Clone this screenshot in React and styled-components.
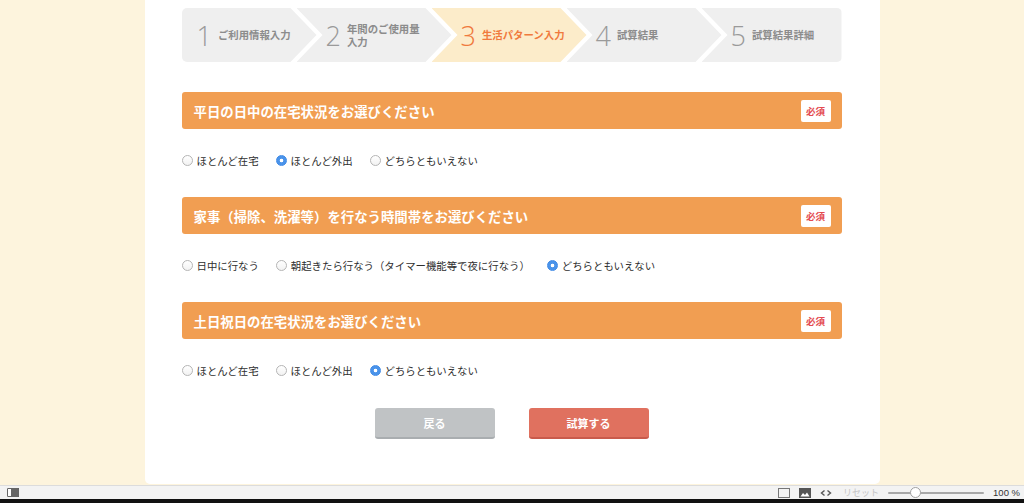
import styled, { createGlobalStyle } from "styled-components";

const GlobalStyle = createGlobalStyle`
  html, body {
    margin: 0;
    padding: 0;
  }
  body {
    background: #fdf4dd;
    font-family: "Noto Sans CJK JP", "Noto Sans", sans-serif;
  }
`;

const steps = [
  { no: 1, label: ["ご利用情報入力"] },
  { no: 2, label: ["年間のご使用量", "入力"] },
  { no: 3, label: ["生活パターン入力"], active: true },
  { no: 4, label: ["試算結果"] },
  { no: 5, label: ["試算結果詳細"] },
];

const questions = [
  {
    title: "平日の日中の在宅状況をお選びください",
    options: ["ほとんど在宅", "ほとんど外出", "どちらともいえない"],
    selected: 1,
  },
  {
    title: "家事（掃除、洗濯等）を行なう時間帯をお選びください",
    options: ["日中に行なう", "朝起きたら行なう（タイマー機能等で夜に行なう）", "どちらともいえない"],
    selected: 2,
  },
  {
    title: "土日祝日の在宅状況をお選びください",
    options: ["ほとんど在宅", "ほとんど外出", "どちらともいえない"],
    selected: 2,
  },
];

export default function App() {
  return (
    <Screen>
      <GlobalStyle />
      <Stage>
        <Panel>
          <Steps>
            {steps.map((s, i) => (
              <Step
                key={s.no}
                $first={i === 0}
                $last={i === steps.length - 1}
                $active={s.active}
              >
                <StepNo $active={s.active}>{s.no}</StepNo>
                <StepLabel $active={s.active}>
                  {s.label.map((l) => (
                    <span key={l}>{l}</span>
                  ))}
                </StepLabel>
              </Step>
            ))}
          </Steps>

          {questions.map((q) => (
            <Section key={q.title}>
              <Header>
                <Title>{q.title}</Title>
                <Required>必須</Required>
              </Header>
              <Options>
                {q.options.map((o, oi) => (
                  <Option key={o}>
                    <Radio $checked={oi === q.selected} />
                    {o}
                  </Option>
                ))}
              </Options>
            </Section>
          ))}

          <Buttons>
            <Button $variant="back">戻る</Button>
            <Button $variant="go">試算する</Button>
          </Buttons>
        </Panel>
      </Stage>

      <StatusBar>
        <SidebarIcon />
        <BarRight>
          <svg width="12" height="10" viewBox="0 0 12 10">
            <rect x="0.5" y="0.5" width="11" height="9" fill="none" stroke="#777" />
          </svg>
          <svg width="12" height="10" viewBox="0 0 12 10">
            <rect x="0" y="0" width="12" height="10" fill="#555" />
            <path d="M1.5 8.5 L4 5 L6 7 L8 4.5 L10.5 8.5 Z" fill="#fff" />
          </svg>
          <svg width="12" height="10" viewBox="0 0 12 10">
            <path d="M4.5 2.5 L1.5 5 L4.5 7.5" fill="none" stroke="#555" strokeWidth="1.4" />
            <path d="M7.5 2.5 L10.5 5 L7.5 7.5" fill="none" stroke="#555" strokeWidth="1.4" />
          </svg>
          <ResetText>リセット</ResetText>
          <Slider>
            <Knob />
          </Slider>
          <Zoom>100 %</Zoom>
        </BarRight>
      </StatusBar>
      <BlackEdge />
    </Screen>
  );
}

const Screen = styled.div`
  height: 503px;
  display: flex;
  flex-direction: column;
  overflow: hidden;
`;

const Stage = styled.div`
  height: 485px;
  display: flex;
  justify-content: center;
  background: #fdf4dd;
`;

const Panel = styled.main`
  width: 735px;
  height: 484px;
  box-sizing: border-box;
  padding: 8px 38px 0 37px;
  background: #fff;
  border-radius: 0 0 5px 5px;
`;

const Steps = styled.ol`
  list-style: none;
  margin: 0;
  padding: 0;
  display: flex;
  height: 54px;
`;

const Step = styled.li`
  flex: ${(p) => (p.$last ? "1 1 auto" : p.$first ? "0 0 135px" : "0 0 155px")};
  margin-left: ${(p) => (p.$first ? "0" : "-20px")};
  display: flex;
  align-items: center;
  gap: 6px;
  padding-left: ${(p) => (p.$first ? "15px" : "29px")};
  box-sizing: border-box;
  background: ${(p) => (p.$active ? "#fcecca" : "#efefef")};
  border-radius: ${(p) => (p.$first ? "5px 0 0 5px" : p.$last ? "0 5px 5px 0" : "0")};
  clip-path: ${(p) =>
    p.$first
      ? "polygon(0 0, calc(100% - 26px) 0, 100% 50%, calc(100% - 26px) 100%, 0 100%)"
      : p.$last
      ? "polygon(0 0, 100% 0, 100% 100%, 0 100%, 26px 50%)"
      : "polygon(0 0, calc(100% - 26px) 0, 100% 50%, calc(100% - 26px) 100%, 0 100%, 26px 50%)"};
`;

const StepNo = styled.span`
  font-family: "Open Sans", "Lato", sans-serif;
  font-weight: 300;
  font-size: 27px;
  line-height: 1;
  color: ${(p) => (p.$active ? "#f07a3d" : "#9a9a9a")};
`;

const StepLabel = styled.span`
  display: flex;
  flex-direction: column;
  gap: 1px;
  font-size: 10.4px;
  line-height: 12px;
  font-weight: 700;
  color: ${(p) => (p.$active ? "#f07a3d" : "#8c8c8c")};
`;

const Section = styled.section`
  margin-top: 30px;
`;

const Header = styled.div`
  height: 37px;
  display: flex;
  align-items: center;
  justify-content: space-between;
  padding: 0 11px 0 12px;
  background: #f19e52;
  border-radius: 3px;
`;

const Title = styled.h2`
  margin: 0;
  font-size: 13.4px;
  font-weight: 700;
  color: #fff;
`;

const Required = styled.span`
  width: 30px;
  height: 22px;
  display: flex;
  align-items: center;
  justify-content: center;
  background: #fff;
  border-radius: 2px;
  font-size: 9.5px;
  font-weight: 700;
  color: #e44b50;
`;

const Options = styled.div`
  margin-top: 24px;
  height: 14px;
  display: flex;
  align-items: center;
`;

const Option = styled.label`
  display: inline-flex;
  align-items: center;
  gap: 4px;
  margin-right: 17px;
  font-size: 10.4px;
  color: #2e2e2e;
  white-space: nowrap;
`;

const Radio = styled.span`
  width: 11px;
  height: 11px;
  box-sizing: border-box;
  border-radius: 50%;
  border: 1px solid ${(p) => (p.$checked ? "#3f8ae6" : "#b5b5b5")};
  background: ${(p) =>
    p.$checked
      ? "radial-gradient(circle, #fff 0 1.6px, #4a93ea 2.1px)"
      : "linear-gradient(#fff, #f2f2f2)"};
`;

const Buttons = styled.div`
  margin-top: 31px;
  display: flex;
  justify-content: center;
  gap: 34px;
`;

const Button = styled.button`
  width: 120px;
  height: 31px;
  border: 0;
  border-bottom: 2px solid ${(p) => (p.$variant === "go" ? "#c95a4b" : "#a9adb0")};
  border-radius: 3px;
  background: ${(p) => (p.$variant === "go" ? "#e0715f" : "#c0c3c5")};
  color: #fff;
  font-family: inherit;
  font-size: 11px;
  font-weight: 700;
  padding: 0;
`;

const StatusBar = styled.footer`
  height: 13px;
  border-top: 1px solid #dcdcdc;
  background: #f3f3f3;
  display: flex;
  align-items: center;
  justify-content: space-between;
  padding: 0 4px 0 7px;
`;

const SidebarIcon = styled.span`
  width: 12px;
  height: 9px;
  box-sizing: border-box;
  background: #666;
  border-radius: 1px;
  border: 1px solid #555;
  border-left: 4px solid #fff;
  outline: 1px solid #666;
  outline-offset: -1px;
`;

const BarRight = styled.div`
  display: flex;
  align-items: center;
  gap: 9px;
`;

const ResetText = styled.span`
  font-size: 9px;
  color: #c4c4c4;
  margin-left: 2px;
`;

const Slider = styled.span`
  position: relative;
  width: 96px;
  height: 2px;
  background: #a8a8a8;
  border-radius: 1px;
`;

const Knob = styled.span`
  position: absolute;
  left: 22px;
  top: -5px;
  width: 11px;
  height: 11px;
  box-sizing: border-box;
  border-radius: 50%;
  background: #fff;
  border: 1px solid #a0a0a0;
`;

const Zoom = styled.span`
  font-family: "Liberation Sans", Arial, sans-serif;
  font-size: 9.5px;
  color: #333;
`;

const BlackEdge = styled.div`
  height: 4px;
  background: #111;
`;
